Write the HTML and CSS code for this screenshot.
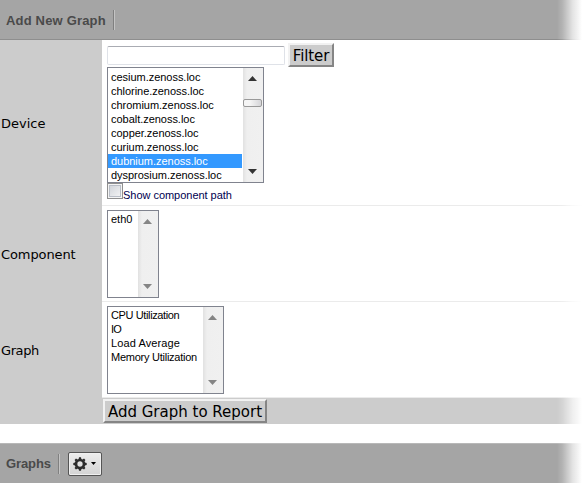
FILE: index.html
```html
<!DOCTYPE html>
<html lang="en">
<head>
<meta charset="utf-8">
<title>Graph Report</title>
<link rel="stylesheet" href="styles.css">
</head>
<body>
<main class="page">
  <header class="bar bar-top"><h2 class="add-title">Add New Graph</h2><i class="sep"></i></header>
  <section class="form">
    <div class="row device">
      <div class="label"><span>Device</span></div>
      <div class="field">
        <div class="filter"><input class="text" type="text" aria-label="Filter"><button class="btn filter-btn"><span>Filter</span></button></div>
        <div class="list devices">
          <ul><li>cesium.zenoss.loc</li><li>chlorine.zenoss.loc</li><li>chromium.zenoss.loc</li><li>cobalt.zenoss.loc</li><li>copper.zenoss.loc</li><li>curium.zenoss.loc</li><li class="selected">dubnium.zenoss.loc</li><li>dysprosium.zenoss.loc</li></ul>
          <div class="scroll"><svg width="9" height="5"><path d="M0 5L4.5 0L9 5Z"/></svg><i class="thumb"></i><svg width="9" height="5"><path d="M0 0H9L4.5 5Z"/></svg></div>
        </div>
        <div class="check"><i class="box"></i><span>Show component path</span></div>
      </div>
    </div>
    <div class="row">
      <div class="label"><span class="l-comp">Component</span></div>
      <div class="field">
        <div class="list components">
          <ul><li>eth0</li></ul>
          <div class="scroll off"><svg width="9" height="5"><path d="M0 5L4.5 0L9 5Z"/></svg><svg width="9" height="5"><path d="M0 0H9L4.5 5Z"/></svg></div>
        </div>
      </div>
    </div>
    <div class="row">
      <div class="label"><span class="l-graph">Graph</span></div>
      <div class="field">
        <div class="list graphs">
          <ul><li class="cpu">CPU Utilization</li><li class="io">IO</li><li class="load">Load Average</li><li class="mem">Memory Utilization</li></ul>
          <div class="scroll off"><svg width="9" height="5"><path d="M0 5L4.5 0L9 5Z"/></svg><svg width="9" height="5"><path d="M0 0H9L4.5 5Z"/></svg></div>
        </div>
      </div>
    </div>
    <div class="actions"><button class="btn add-btn"><span>Add Graph to Report</span></button></div>
  </section>
  <header class="bar bar-bottom"><h2 class="graphs-title">Graphs</h2><i class="sep"></i>
    <button class="gear" aria-label="Graph actions">
      <svg width="14" height="14" viewBox="-7 -7 14 14"><circle r="4" fill="none" stroke="#2c2c2c" stroke-width="2.7"/><g fill="#2c2c2c"><path id="t" d="M-1.4-4.8L-1-6.7H1L1.4-4.8ZM-1.4 4.8L-1 6.7H1L1.4 4.8ZM-4.8-1.4L-6.7-1V1L-4.8 1.4ZM4.8-1.4L6.7-1V1L4.8 1.4Z"/><use href="#t" transform="rotate(45)"/></g></svg>
      <svg class="caret" width="5" height="3"><path d="M0 0H5L2.5 3Z"/></svg>
    </button>
  </header>
  <div class="fade"></div>
</main>
</body>
</html>
```
FILE: styles.css
```css
* { box-sizing: border-box; }
body { margin: 0; background: #fff; overflow: hidden; }
.page { position: relative; width: 583px; height: 483px; overflow: hidden; font-family: "DejaVu Sans", sans-serif; color: #000; }
.bar { display: flex; align-items: center; height: 40px; padding-left: 6px; background: #a5a5a5; }
.bar-top { border-bottom: 1px solid #8e8e8e; }
.bar-bottom { margin-top: 19px; border-top: 1px solid #b8b8b8; }
h2 { margin: 0; padding-top: 2px; font: bold 13px/16px "Liberation Sans", sans-serif; color: #4a4a4a; white-space: nowrap; }
.add-title { width: 100px; letter-spacing: 0.18px; }
.graphs-title { width: 46px; letter-spacing: -0.1px; }
.bar-bottom h2 { padding-top: 0; }
.sep { width: 2px; height: 20px; margin-left: 7px; background: #808080; border-right: 1px solid #c4c4c4; }
.bar-bottom .sep { margin-left: 6px; }
.row { display: grid; grid-template-columns: 102px 1fr; height: 96px; }
.device { height: 166px; }
.label { display: flex; align-items: center; padding: 2px 0 0 1px; background: #ccc; font-size: 13px; line-height: 16px; }
.l-comp { letter-spacing: -0.1px; }
.l-graph { letter-spacing: -0.4px; }
.field { padding: 4px 5px 0; border-bottom: 1px solid #ebebeb; }
.device .field { padding-top: 3px; }
.filter { display: flex; align-items: flex-start; height: 24px; }
.text { width: 178px; height: 19px; margin: 3px 3px 0 0; padding: 0; border: 1px solid #dfe2e8; border-top-color: #aaacb3; border-radius: 2px; background: #fff; }
.btn { height: 24px; margin: 0; padding: 1px 0 0; border: 2px solid; border-color: #f2f2f2 #858585 #858585 #f2f2f2; background: #ccc; color: #000; font: 15px/18px "DejaVu Sans", sans-serif; white-space: nowrap; }
.filter-btn { width: 46px; letter-spacing: -0.1px; }
.add-btn { width: 164px; }
.list { display: flex; height: 88px; border: 1px solid #80838e; background: #fff; font: 11px/14px "Liberation Sans", sans-serif; }
.devices { width: 157px; height: 116px; }
.components { width: 52px; }
.graphs { width: 117px; }
ul { flex: 1; min-width: 0; margin: 0; padding: 1px 0 0; list-style: none; }
.devices ul { padding-top: 2px; letter-spacing: -0.03px; }
li { height: 14px; padding-left: 3px; white-space: nowrap; }
.cpu { letter-spacing: -0.38px; }
.io { letter-spacing: -0.8px; }
.load { letter-spacing: 0.1px; }
.mem { letter-spacing: -0.25px; }
.selected { margin-right: 1px; background: #39f; color: #fff; }
.scroll { display: flex; flex-direction: column; justify-content: space-between; width: 20px; padding: 8px 0 8px 5px; background: linear-gradient(90deg, #e1e1e1, #efefef 4px, #f0f0f0); fill: #333; }
.scroll svg { display: block; }
.off { fill: #858585; }
.thumb { width: 19px; height: 8px; margin: -44px 0 0 -5px; border: 1px solid #999; border-radius: 2px; background: linear-gradient(90deg, #f5f5f5 35%, #d5d5d8); }
.check { display: flex; height: 16px; font: 11px/14px "Liberation Sans", sans-serif; color: #000050; }
.check span { padding-top: 5px; letter-spacing: -0.03px; }
.box { width: 16px; height: 16px; border: 1px solid #8f8f8f; box-shadow: inset 0 0 0 1px #f4f4f4, inset 0 0 0 2px #b9bec7; background: linear-gradient(135deg, #ccd0d6, #f7f7f7); }
.actions { height: 26px; padding: 1px 0 0 103px; background: #ccc; }
.gear { display: flex; align-items: center; width: 34px; height: 24px; margin-left: 8px; padding: 0 0 0 4px; border: 1px solid #555; border-radius: 2px; background: linear-gradient(#ededed, #d4d4d4); box-shadow: inset 0 0 0 1px #f0f0f0; }
.caret { margin-left: 4px; }
.fade { position: absolute; top: 0; right: 0; width: 26px; height: 483px; background: linear-gradient(90deg, #fff0, #ffffff28 20%, #ffffffb0 60%, #fff 96%); }
```
